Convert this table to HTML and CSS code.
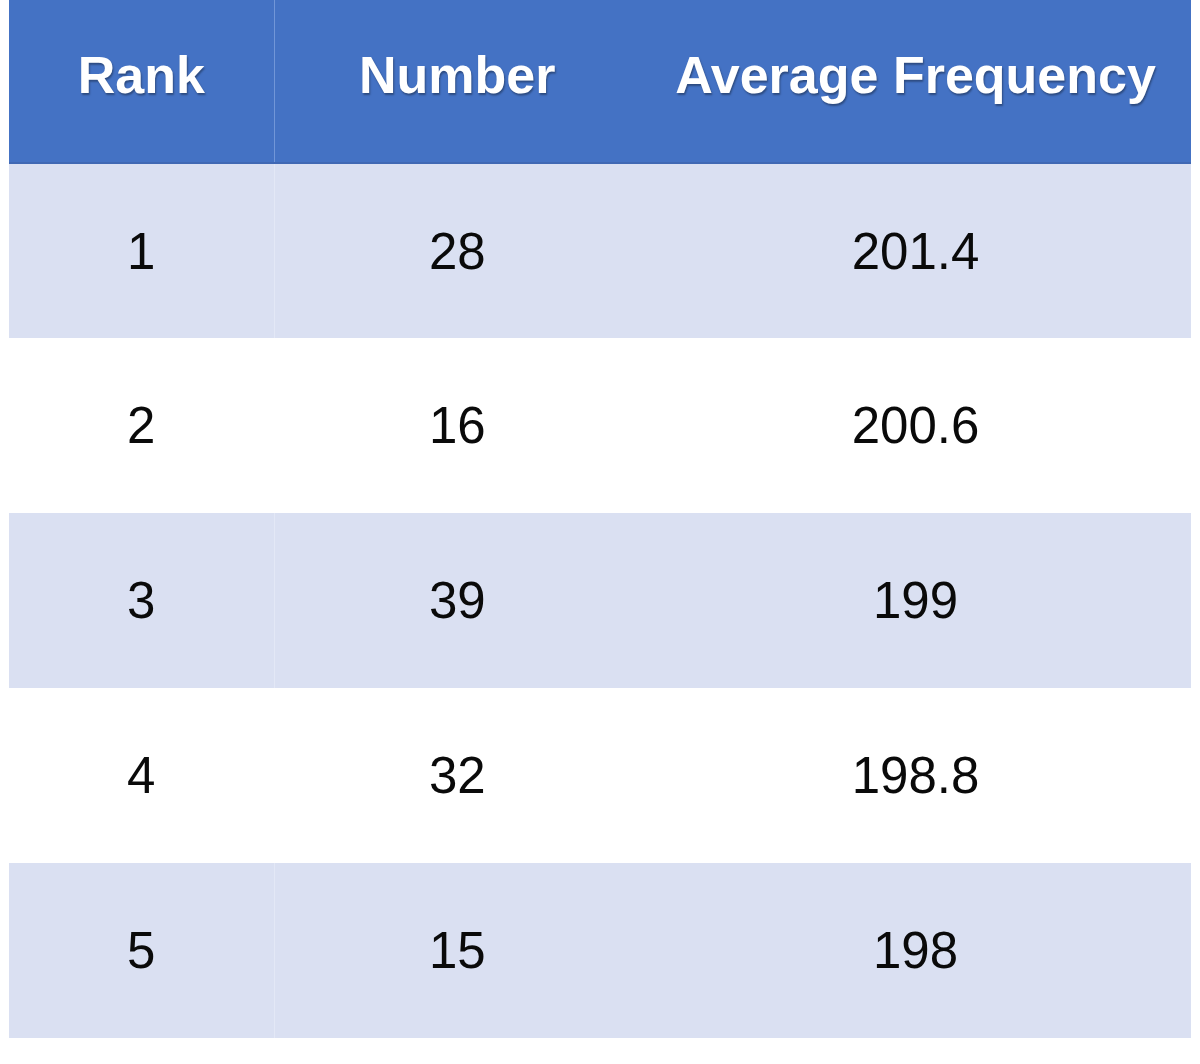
FILE: index.html
```html
<!DOCTYPE html>
<html>
<head>
<meta charset="utf-8">
<link rel="stylesheet" href="styles.css">
</head>
<body>
<table class="freq">
  <colgroup>
    <col class="c-rank">
    <col class="c-num">
    <col class="c-avg">
  </colgroup>
  <thead>
    <tr><th class="first">Rank</th><th>Number</th><th>Average Frequency</th></tr>
  </thead>
  <tbody>
    <tr class="band"><td class="first">1</td><td>28</td><td>201.4</td></tr>
    <tr><td class="first">2</td><td>16</td><td>200.6</td></tr>
    <tr class="band"><td class="first">3</td><td>39</td><td>199</td></tr>
    <tr><td class="first">4</td><td>32</td><td>198.8</td></tr>
    <tr class="band"><td class="first">5</td><td>15</td><td>198</td></tr>
  </tbody>
</table>
</body>
</html>
```
FILE: styles.css
```css
html, body {
  margin: 0;
  padding: 0;
  background: #ffffff;
}
body {
  padding: 0 9px;
  font-family: "Liberation Sans", Arial, sans-serif;
}
.freq {
  width: 100%;
  border-collapse: collapse;
  table-layout: fixed;
}
.c-rank { width: 265px; }
.c-num { width: 366px; }
.c-avg { width: 551px; }
.freq th {
  background: #4472c4;
  color: #ffffff;
  font-size: 52px;
  font-weight: bold;
  height: 163px;
  padding: 0 0 13px 0;
  box-sizing: border-box;
  text-align: center;
  vertical-align: middle;
  text-shadow: 1px 2px 2px rgba(0, 0, 0, 0.35);
  border-bottom: 2px solid #4068b4;
}
.freq th.first {
  border-right: 1px solid #7196d8;
}
.freq td {
  height: 175px;
  padding: 0;
  box-sizing: border-box;
  font-size: 51px;
  color: #0a0a0a;
  text-align: center;
  vertical-align: middle;
}
.freq tr.band td {
  background: #dae0f2;
}
.freq td.first {
  border-right: 1px solid #ffffff;
}
.freq tr.band td.first {
  border-right: 1px solid #e3e8f6;
}
```
